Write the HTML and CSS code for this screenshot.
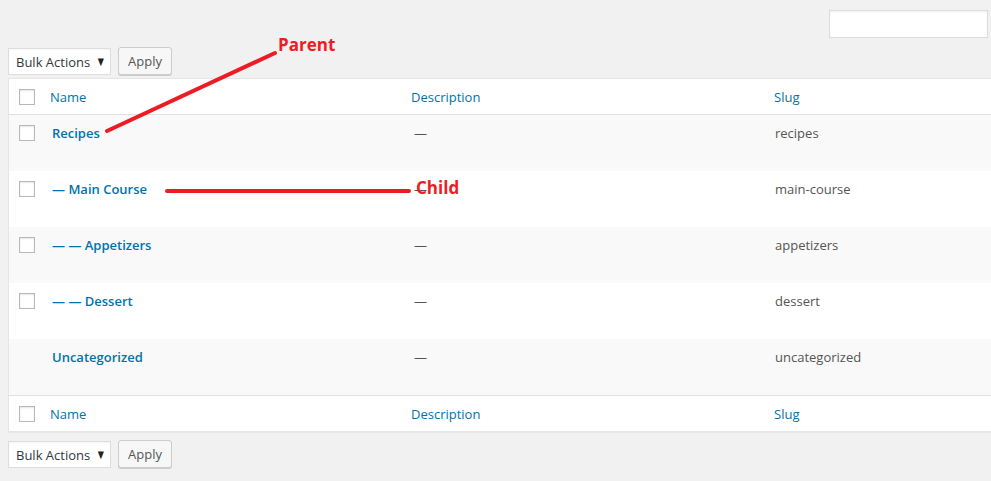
FILE: index.html
```html
<!DOCTYPE html>
<html>
<head>
<meta charset="utf-8">
<link rel="stylesheet" href="styles.css">
</head>
<body>
<div class="page">
  <div class="search-row"><input class="search" type="text"></div>
  <div class="tablenav top">
    <div class="select">Bulk Actions<span class="arrow">&#9660;</span></div>
    <button class="btn">Apply</button>
  </div>
  <div class="list">
    <div class="row head">
      <div class="cb"><span class="box"></span></div>
      <div class="cell name"><a>Name</a></div>
      <div class="cell desc"><a>Description</a></div>
      <div class="cell slug"><a>Slug</a></div>
    </div>
    <div class="row item alt">
      <div class="cb"><span class="box"></span></div>
      <div class="cell name"><a class="title">Recipes</a></div>
      <div class="cell desc">—</div>
      <div class="cell slug">recipes</div>
    </div>
    <div class="row item">
      <div class="cb"><span class="box"></span></div>
      <div class="cell name"><a class="title">— Main Course</a></div>
      <div class="cell desc">—</div>
      <div class="cell slug">main-course</div>
    </div>
    <div class="row item alt">
      <div class="cb"><span class="box"></span></div>
      <div class="cell name"><a class="title">— — Appetizers</a></div>
      <div class="cell desc">—</div>
      <div class="cell slug">appetizers</div>
    </div>
    <div class="row item">
      <div class="cb"><span class="box"></span></div>
      <div class="cell name"><a class="title">— — Dessert</a></div>
      <div class="cell desc">—</div>
      <div class="cell slug">dessert</div>
    </div>
    <div class="row item alt">
      <div class="cb"></div>
      <div class="cell name"><a class="title">Uncategorized</a></div>
      <div class="cell desc">—</div>
      <div class="cell slug">uncategorized</div>
    </div>
    <div class="row head foot">
      <div class="cb"><span class="box"></span></div>
      <div class="cell name"><a>Name</a></div>
      <div class="cell desc"><a>Description</a></div>
      <div class="cell slug"><a>Slug</a></div>
    </div>
  </div>
  <div class="tablenav bottom">
    <div class="select">Bulk Actions<span class="arrow">&#9660;</span></div>
    <button class="btn">Apply</button>
  </div>

  <svg class="annot" width="991" height="481" viewBox="0 0 991 481">
    <line x1="107" y1="131" x2="275" y2="53" stroke="#ed1c24" stroke-width="4" stroke-linecap="round"/>
    <line x1="167" y1="191" x2="409" y2="191" stroke="#ed1c24" stroke-width="4" stroke-linecap="round"/>
  </svg>
  <span class="label parent">Parent</span>
  <span class="label child">Child</span>
</div>
</body>
</html>
```

FILE: styles.css
```css
html, body {
  margin: 0;
  padding: 0;
  background: #f1f1f1;
  overflow: hidden;
}
body {
  width: 991px;
  height: 481px;
  font-family: "Open Sans", "Segoe UI", sans-serif;
  font-size: 13px;
  color: #555;
}
.page {
  position: relative;
  width: 991px;
  height: 481px;
  padding-left: 8px;
  box-sizing: border-box;
}
.search-row {
  display: flex;
  justify-content: flex-end;
  padding-top: 10px;
  padding-right: 3px;
}
.search {
  width: 159px;
  height: 28px;
  box-sizing: border-box;
  border: 1px solid #ddd;
  background: #fff;
  box-shadow: inset 0 1px 2px rgba(0,0,0,.07);
  margin: 0;
  padding: 0;
}
.tablenav {
  display: flex;
  align-items: center;
  gap: 7px;
  height: 28px;
}
.tablenav.top {
  margin-top: 9px;
  margin-bottom: 3px;
}
.tablenav.bottom {
  margin-top: 8px;
}
.select {
  width: 103px;
  height: 27px;
  box-sizing: border-box;
  border: 1px solid #ddd;
  background: #fff;
  box-shadow: inset 0 1px 2px rgba(0,0,0,.04);
  display: flex;
  align-items: center;
  justify-content: space-between;
  padding: 0 5px 0 7px;
  color: #32373c;
  font-size: 13px;
  margin-top: 1px;
}
.arrow {
  font-size: 10px;
  color: #222;
  font-family: "DejaVu Sans", sans-serif;
  transform: scaleX(0.8);
}
.btn {
  height: 28px;
  width: 54px;
  box-sizing: border-box;
  border: 1px solid #ccc;
  border-radius: 3px;
  background: #f7f7f7;
  box-shadow: 0 1px 0 #ccc;
  color: #555;
  font-family: "Open Sans", "Segoe UI", sans-serif;
  font-size: 13px;
  padding: 0;
  margin-top: -1px;
}
.list {
  width: 1010px;
  border: 1px solid #e5e5e5;
  background: #fff;
  box-shadow: 0 1px 1px rgba(0,0,0,.04);
}
.row {
  display: grid;
  grid-template-columns: 31px 361px 363px 1fr;
}
.row.head {
  height: 35px;
  border-bottom: 1px solid #e1e1e1;
  align-items: start;
}
.row.head.foot {
  border-bottom: none;
  border-top: 1px solid #e1e1e1;
}
.row.item {
  height: 56px;
}
.row.alt {
  background: #f9f9f9;
}
.cb {
  padding: 10px 0 0 10px;
}
.box {
  display: block;
  width: 16px;
  height: 16px;
  box-sizing: border-box;
  border: 1px solid #b4b9be;
  background: #fff;
  box-shadow: inset 0 1px 2px rgba(0,0,0,.1);
}
.cell {
  padding: 9px 10px 0 10px;
  line-height: 19px;
}
.row.head .cell {
  padding-top: 9px;
}
.row.head a {
  color: #0073aa;
}
.row.item .name {
  padding-left: 12px;
}
.row.item .desc {
  padding-left: 13px;
}
.row.item .slug {
  padding-left: 11px;
}
.title {
  color: #0073aa;
  font-weight: 600;
  font-size: 13px;
}
.annot {
  position: absolute;
  left: 0;
  top: 0;
  pointer-events: none;
}
.label {
  position: absolute;
  color: #ed1c24;
  font-family: "Open Sans", sans-serif;
  font-weight: 700;
  font-size: 17px;
  line-height: 20px;
}
.parent {
  left: 278px;
  top: 35px;
}
.child {
  left: 416px;
  top: 178px;
}
```
